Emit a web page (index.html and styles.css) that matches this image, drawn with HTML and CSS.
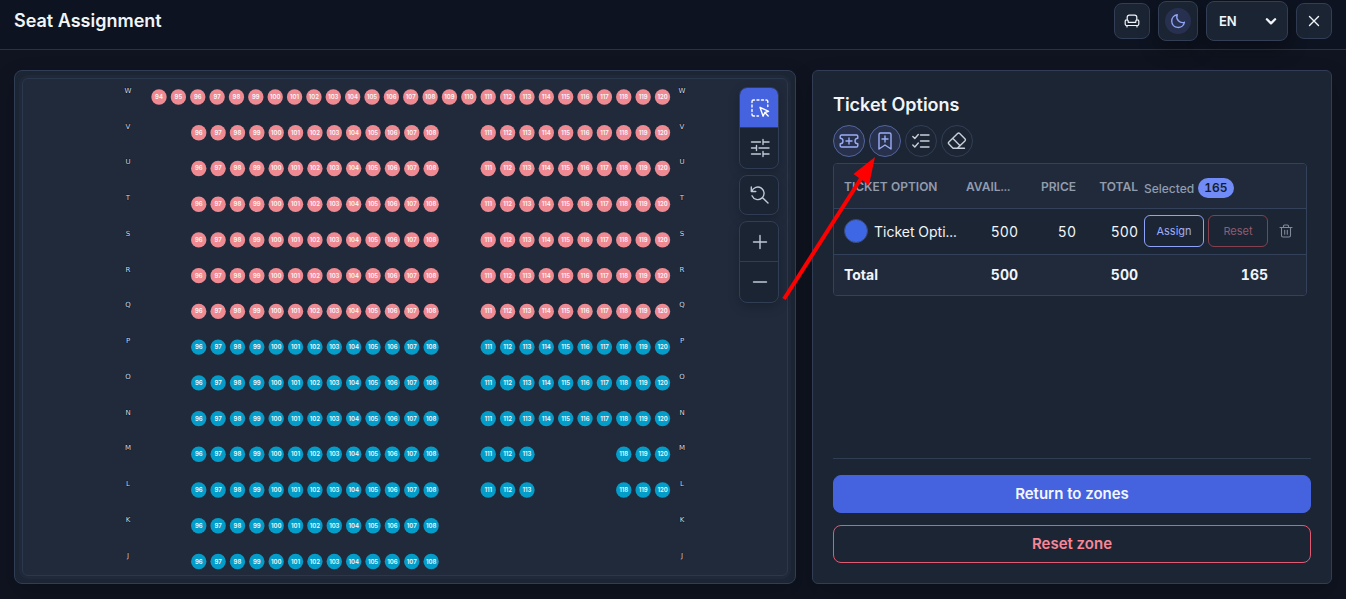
FILE: index.html
```html
<!DOCTYPE html>
<html lang="en">
<head>
<meta charset="utf-8">
<meta name="viewport" content="width=device-width, initial-scale=1">
<title>Seat Assignment</title>
<link rel="stylesheet" href="styles.css">
</head>
<body>
<header class="topbar">
  <h1 class="topbar-title">Seat Assignment</h1>
  <div class="topbar-actions">
    <button class="icon-button" type="button" aria-label="Seats">
      <svg class="icon-sm icon-seat" viewBox="0 0 16 16"><path d="M3.200 6.300V4.200A2 2 0 0 1 5.200 2.200h5.600a2 2 0 0 1 2 2v2.100M4.200 9.300V8a1.600 1.600 0 0 0-3 0v3a1.500 1.500 0 0 0 1.500 1.500h10.600a1.500 1.500 0 0 0 1.500-1.500V8a1.600 1.600 0 0 0-3 0v1.300zM3 12.500v1.500M13 12.500v1.500"/></svg>
    </button>
    <button class="icon-button icon-button-large" type="button" aria-label="Dark theme">
      <span class="theme-dot"><svg class="icon-sm" viewBox="0 0 16 16"><path d="M7.200 1.700a6.400 6.400 0 1 0 7.200 7.600A5.800 5.800 0 0 1 7.200 1.700z"/></svg></span>
    </button>
    <div class="language">
      <select class="language-select" aria-label="Language"><option>EN</option></select>
      <svg class="language-arrow" viewBox="0 0 12 12"><path d="M2.500 4.500 6 8l3.500-3.500"/></svg>
    </div>
    <button class="icon-button" type="button" aria-label="Close">
      <svg class="icon-sm" viewBox="0 0 16 16"><path d="m3.500 3.500 9 9M12.500 3.500l-9 9"/></svg>
    </button>
  </div>
</header>

<main class="workspace">
  <section class="panel map-panel" aria-label="Seat map">
    <div class="map-frame">
      <svg class="seat-map" id="seat-map" viewBox="0 0 764 496" preserveAspectRatio="xMidYMin meet"></svg>
    </div>
    <div class="map-tools">
      <div class="tool-group">
        <button class="tool tool-active" type="button" aria-label="Select seats">
          <svg class="icon-lg" viewBox="0 0 20 20"><path d="M2 4.500V3.500A1.500 1.500 0 0 1 3.500 2h1M7 2h2M11.500 2h2M16 2a1.500 1.500 0 0 1 1.800 1.500v1M17.800 7v1.500M2 7v2M2 11.500v2M2 16v.5A1.500 1.500 0 0 0 3.500 18h1M7 18h1.500"/><path d="m10 9.300 8.600 4-3.800 1.200-1.700 3.700zM15 14.700l3.200 3.200"/></svg>
        </button>
        <button class="tool" type="button" aria-label="Adjust">
          <svg class="icon-lg" viewBox="0 0 20 20"><path d="M1.500 4h9M13 4h6M13 1.500v5M1.500 10h4.300M9 10h10M6.500 7.500v5M1.500 16h9M13 16h6M13 13.500v5"/></svg>
        </button>
      </div>
      <div class="tool-group">
        <button class="tool" type="button" aria-label="Reset zoom">
          <svg class="icon-lg" viewBox="0 0 20 20"><path d="M1.300 2v4.500h4.500M1.800 6.300A6.300 6.300 0 1 1 2 10.800M12.600 12.700 18 18"/></svg>
        </button>
      </div>
      <div class="tool-group">
        <button class="tool" type="button" aria-label="Zoom in">
          <svg class="icon-lg" viewBox="0 0 20 20"><path d="M3.500 10h13M10 3.500v13"/></svg>
        </button>
        <button class="tool" type="button" aria-label="Zoom out">
          <svg class="icon-lg" viewBox="0 0 20 20"><path d="M3.500 10h13"/></svg>
        </button>
      </div>
    </div>
  </section>

  <section class="panel side-panel">
    <div class="side-content">
      <h2 class="side-title">Ticket Options</h2>
      <div class="modes">
        <button class="mode mode-on" type="button" aria-label="Ticket options">
          <svg class="icon-lg" viewBox="0 0 20 20"><path d="M2.500 4h15A1.300 1.300 0 0 1 18.800 5.300v1.900a2.800 2.800 0 0 0 0 5.600v1.900a1.300 1.300 0 0 1-1.300 1.300h-15a1.300 1.300 0 0 1-1.300-1.300v-1.900a2.800 2.800 0 0 0 0-5.600V5.300A1.300 1.300 0 0 1 2.500 4zM7 10h6M10 7v6"/></svg>
        </button>
        <button class="mode mode-on" type="button" aria-label="Reservations">
          <svg class="icon-lg" viewBox="0 0 20 20"><path d="M4 18V3.500A1.500 1.500 0 0 1 5.500 2h9A1.500 1.500 0 0 1 16 3.500V18l-6-4zM7 8h6M10 5v6"/></svg>
        </button>
        <button class="mode" type="button" aria-label="Checklist">
          <svg class="icon-lg" viewBox="0 0 20 20"><path d="m1.800 5.500 2 2L7.300 3.500M1.800 14l2 2 3.500-4M9.500 4H18M9.500 10H18M9.500 16H18"/></svg>
        </button>
        <button class="mode" type="button" aria-label="Eraser">
          <svg class="icon-lg" viewBox="0 0 20 20"><path d="M6 17.300 1.900 13a1.500 1.500 0 0 1 0-2.100l8.700-8.400a1.500 1.500 0 0 1 2.100 0l5.200 5.300a1.500 1.500 0 0 1 0 2.100L10.300 17.300zM5.700 7.300l7.400 7.400M6 17.300h11.500"/></svg>
        </button>
      </div>
      <div class="table-frame">
        <table class="tickets">
          <colgroup><col class="col-name"><col class="col-available"><col class="col-price"><col class="col-total"><col class="col-selected"><col class="col-delete"></colgroup>
          <thead>
            <tr><th class="name">TICKET OPTION</th><th class="start">AVAIL...</th><th>PRICE</th><th>TOTAL</th><th class="start"><div class="selected">Selected <span class="badge">165</span></div></th><th></th></tr>
          </thead>
          <tbody>
            <tr>
              <td class="name"><div class="option"><span class="swatch"></span><span>Ticket Opti...</span></div></td>
              <td>500</td><td>50</td><td>500</td>
              <td><div class="row-actions"><button class="small-button assign" type="button">Assign</button><button class="small-button reset" type="button">Reset</button></div></td>
              <td class="delete-cell"><button class="delete" type="button" aria-label="Delete ticket option"><svg class="icon-xs" viewBox="0 0 14 14"><path d="M1 3.500h12M2.500 3.500v8A1.500 1.500 0 0 0 4 13h6a1.500 1.500 0 0 0 1.500-1.500v-8M4.500 3.500V2A1 1 0 0 1 5.500 1h3a1 1 0 0 1 1 1v1.500M5.700 6.300v4M8.300 6.300v4"/></svg></button></td>
            </tr>
          </tbody>
          <tfoot>
            <tr><td class="name">Total</td><td>500</td><td></td><td>500</td><td>165</td><td></td></tr>
          </tfoot>
        </table>
      </div>
    </div>
    <div class="side-footer">
      <button class="wide-button primary" type="button">Return to zones</button>
      <button class="wide-button danger" type="button">Reset zone</button>
    </div>
    <svg class="pointer-arrow" viewBox="0 0 100 150" aria-hidden="true"><path class="arrow-line" d="M6 145 84 23"/><path class="arrow-head" d="M97 3 75.500 20 81 24 91 31z"/></svg>
  </section>
</main>
<script src="seats.js"></script>
</body>
</html>
```
FILE: styles.css
```css
* {
  box-sizing: border-box;
}

body {
  margin: 0;
  min-height: 100vh;
  display: flex;
  flex-direction: column;
  background: #0f1420;
  color: #f1f5f9;
  font-family: Inter, "Liberation Sans", sans-serif;
  font-size: 14px;
}

button,
select {
  font: inherit;
  color: inherit;
  cursor: pointer;
}

button {
  display: flex;
  align-items: center;
  justify-content: center;
  padding: 0;
}

svg {
  display: block;
  fill: none;
  stroke: currentColor;
  stroke-width: 1.4;
  stroke-linecap: round;
  stroke-linejoin: round;
}

.icon-xs {
  width: 14px;
  height: 14px;
  stroke-width: 1.1;
}

.icon-sm {
  width: 16px;
  height: 16px;
}

.icon-seat {
  stroke-width: 1.2;
}

.icon-lg {
  width: 20px;
  height: 20px;
}

.topbar {
  display: flex;
  align-items: center;
  justify-content: space-between;
  height: 50px;
  padding: 1px 14px 8px;
  background: #0d1320;
  border-bottom: 1px solid #283347;
}

.topbar-title {
  margin: 0;
  font-size: 18px;
  line-height: 24px;
  font-weight: 600;
}

.topbar-actions {
  display: flex;
  align-items: center;
  gap: 8px;
}

.icon-button {
  width: 36px;
  height: 36px;
  background: #1b2433;
  border: 1px solid #323e56;
  border-radius: 8px;
}

.icon-button-large {
  width: 40px;
  height: 40px;
  box-shadow: 0 8px 20px rgba(0, 0, 0, 0.3);
}

.theme-dot {
  display: flex;
  align-items: center;
  justify-content: center;
  width: 26px;
  height: 26px;
  border-radius: 50%;
  background: #27314f;
  color: #91a4f5;
}

.language {
  position: relative;
}

.language-select {
  display: block;
  width: 82px;
  height: 40px;
  padding: 0 12px;
  appearance: none;
  background: #1b2433;
  border: 1px solid #323e56;
  border-radius: 8px;
  box-shadow: 0 8px 20px rgba(0, 0, 0, 0.3);
  font-size: 13px;
  font-weight: 600;
}

.language-arrow {
  position: absolute;
  top: 13px;
  right: 10px;
  width: 14px;
  height: 14px;
  stroke-width: 2;
  pointer-events: none;
}

.workspace {
  flex: 1;
  display: grid;
  grid-template-columns: minmax(0, 1fr) 520px;
  gap: 16px;
  padding: 20px 14px 15px;
}

.panel {
  position: relative;
  border: 1px solid #303d54;
  background: #1c2534;
  box-shadow: 0 10px 24px rgba(0, 0, 0, 0.2);
}

.map-panel {
  display: flex;
  padding: 7px;
  border-radius: 8px;
}

.map-frame {
  flex: 1;
  min-width: 0;
  border: 1px solid #2b374c;
  border-radius: 6px;
  background: #202a3b;
  box-shadow: 0 0 0 3px #1f293a;
}

.seat-map {
  width: 100%;
  stroke: none;
}

.seat-free {
  fill: #f08a92;
}

.seat-taken {
  fill: #049dca;
}

.seat-number {
  fill: #f5f7fa;
  font-size: 6px;
  font-weight: 600;
  text-anchor: middle;
}

.row-label {
  fill: #d5dae2;
  font-family: "DejaVu Sans", sans-serif;
  font-size: 7px;
  text-anchor: middle;
  stroke: #111827;
  stroke-width: 1;
  paint-order: stroke;
}

.map-tools {
  position: absolute;
  top: 16px;
  right: 16px;
  display: flex;
  flex-direction: column;
  gap: 6px;
}

.tool-group {
  overflow: hidden;
  border: 1px solid #303d55;
  border-radius: 8px;
  background: #1b2433;
  box-shadow: 0 4px 12px rgba(0, 0, 0, 0.2);
}

.tool {
  width: 38px;
  height: 38px;
  padding-left: 1px;
  border: 0;
  background: none;
  color: #c1c9d6;
}

.tool:first-child:not(:last-child) {
  height: 39px;
  padding-top: 1px;
}

.tool + .tool {
  height: 41px;
  border-top: 1px solid #303d55;
}

.tool.tool-active {
  background: #4562df;
  color: #ffffff;
}

.side-panel {
  display: flex;
  flex-direction: column;
  justify-content: space-between;
  padding: 20px;
  border-radius: 6px;
}

.side-content {
  padding-right: 4px;
}

.side-title {
  margin: 2px 0 8px;
  font-size: 18px;
  line-height: 24px;
  font-weight: 600;
}

.modes {
  display: flex;
  gap: 4px;
  margin-bottom: 6px;
}

.mode {
  width: 32px;
  height: 32px;
  border: 1px solid #323e55;
  border-radius: 50%;
  background: none;
  color: #c8cfda;
}

.mode-on {
  border-color: #53649f;
  background: #27314b;
  color: #9cadf8;
}

.table-frame {
  overflow: hidden;
  border: 1px solid #33415a;
  border-radius: 4px;
}

.tickets {
  width: 100%;
  table-layout: fixed;
  border-collapse: collapse;
  font-size: 14px;
  font-variant-numeric: tabular-nums;
}

.col-available,
.col-price {
  width: 58px;
}

.col-total {
  width: 62px;
}

.col-selected {
  width: 130px;
}

.col-delete {
  width: 32px;
}

.tickets th,
.tickets td {
  height: 46px;
  padding: 0 6px 0 0;
  text-align: right;
  white-space: nowrap;
}

.tickets thead {
  background: #202a3b;
  color: #929cad;
}

.tickets th {
  height: 44px;
  padding-top: 2px;
  border-bottom: 1px solid #33415a;
  font-size: 12px;
  font-weight: 600;
}

.tickets .name {
  padding-left: 10px;
  text-align: left;
}

.tickets .start {
  text-align: left;
}

.selected {
  display: flex;
  align-items: center;
  gap: 4px;
  padding-top: 3px;
  font-weight: 500;
}

.badge {
  padding: 0 6px;
  border-radius: 10px;
  background: #728cf7;
  color: #141c2d;
  font-size: 12px;
  line-height: 20px;
  font-weight: 600;
}

.tickets tfoot {
  background: #202a3b;
  font-weight: 700;
}

.tickets tfoot td {
  height: 41px;
  border-top: 1px solid #33415a;
}

.option {
  display: flex;
  align-items: center;
  gap: 6px;
}

.swatch {
  flex: none;
  width: 24px;
  height: 24px;
  border: 1px solid #3a4a70;
  border-radius: 50%;
  background: #3e67e5;
}

.row-actions {
  display: flex;
  gap: 4px;
}

.small-button {
  width: 60px;
  height: 32px;
  border: 1px solid;
  border-radius: 6px;
  background: none;
  font-size: 11px;
}

.assign {
  border-color: #8ea2f7;
  color: #9caefa;
}

.reset {
  border-color: #84404f;
  color: #915c70;
}

.tickets .delete-cell {
  padding: 0 8px 0 0;
}

.delete {
  width: 24px;
  height: 24px;
  border: 0;
  background: none;
  color: #7e899a;
}

.side-footer {
  display: flex;
  flex-direction: column;
  gap: 12px;
  padding-top: 16px;
  border-top: 1px solid #303d53;
}

.wide-button {
  height: 38px;
  padding-bottom: 1px;
  border: 1px solid;
  border-radius: 8px;
  font-size: 15px;
  font-weight: 600;
}

.primary {
  border-color: #4562df;
  background: #4562df;
  color: #f4f6ff;
}

.danger {
  border-color: #e05a72;
  background: none;
  color: #f98797;
}

.pointer-arrow {
  position: absolute;
  top: 83px;
  left: -35px;
  width: 100px;
  height: 150px;
  pointer-events: none;
}

.arrow-line {
  stroke: #ff0000;
  stroke-width: 4;
  stroke-linecap: butt;
}

.arrow-head {
  fill: #ff0000;
  stroke: none;
}
```
FILE: seats.js
```js
const map = document.getElementById("seat-map");
const SVG = "http://www.w3.org/2000/svg";
const SEAT_PITCH = 1007 / 52;
const ROW_PITCH = 929 / 26;
const rows = "WVUTSRQPONMLKJ".split("");

function add(name, attrs, text) {
  const node = document.createElementNS(SVG, name);
  for (const key in attrs) node.setAttribute(key, attrs[key]);
  if (text) node.textContent = text;
  map.appendChild(node);
}

function seatNumbers(row) {
  const range = (a, b) => Array.from({ length: b - a + 1 }, (_, i) => a + i);
  if (row === "W") return range(94, 120);
  const left = range(96, 108);
  if ("KJ".includes(row)) return left;
  if ("ML".includes(row)) return [...left, ...range(111, 113), ...range(118, 120)];
  return [...left, ...range(111, 120)];
}

rows.forEach((row, index) => {
  const y = 18 + index * ROW_PITCH;
  add("text", { class: "row-label", x: 105, y: y - 4 }, row);
  add("text", { class: "row-label", x: 659, y: y - 4 }, row);
  seatNumbers(row).forEach((number) => {
    const shift = row !== "W" && number < 109 ? 1 : 0;
    const x = 136 + shift + (number - 94) * SEAT_PITCH;
    add("circle", { class: index < 7 ? "seat-free" : "seat-taken", cx: x, cy: y, r: 7.7 });
    add("text", { class: "seat-number", x: x, y: y + 2 }, String(number));
  });
});
```
